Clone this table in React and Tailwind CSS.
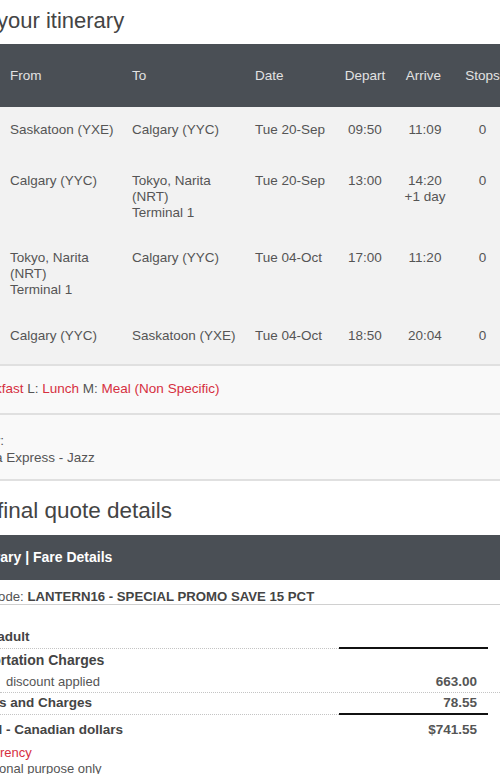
import React from "react";

const rows = [
  { from: ["Saskatoon (YXE)"], to: ["Calgary (YYC)"], date: "Tue 20-Sep", dep: "09:50", arr: ["11:09"], stops: "0", pb: "pb-[20px]" },
  { from: ["Calgary (YYC)"], to: ["Tokyo, Narita", "(NRT)", "Terminal 1"], date: "Tue 20-Sep", dep: "13:00", arr: ["14:20", "+1 day"], stops: "0", pb: "pb-[14px]" },
  { from: ["Tokyo, Narita", "(NRT)", "Terminal 1"], to: ["Calgary (YYC)"], date: "Tue 04-Oct", dep: "17:00", arr: ["11:20"], stops: "0", pb: "pb-[15px]" },
  { from: ["Calgary (YYC)"], to: ["Saskatoon (YXE)"], date: "Tue 04-Oct", dep: "18:50", arr: ["20:04"], stops: "0", pb: "pb-[20px]" },
];

function Lines({ items }) {
  return (
    <div className="flex flex-col">
      {items.map((t, i) => (
        <span key={i} className="whitespace-nowrap">{t}</span>
      ))}
    </div>
  );
}

export default function App() {
  const cols = "grid grid-cols-[122px_123px_90px_60px_60px_55px] w-[510px]";
  return (
    <div className="w-[500px] h-[774px] overflow-hidden bg-white font-['Liberation_Sans',Arial,sans-serif] text-[#555]">
      {/* Title 1 */}
      <div className="h-[44px] pt-[7px] whitespace-nowrap">
        <h1 className="-ml-[3px] text-[22px] leading-[28px] text-[#444] font-normal">your itinerary</h1>
      </div>

      {/* Itinerary table header */}
      <div className={`${cols} h-[63px] bg-[#4a4f55] text-[13.5px] text-[#e2e2e2] items-center pt-[2px]`}>
        <div className="pl-[10px]">From</div>
        <div className="pl-[10px]">To</div>
        <div className="pl-[10px]">Date</div>
        <div className="text-center">Depart</div>
        <div className="text-center pr-[3px]">Arrive</div>
        <div className="text-center">Stops</div>
      </div>

      {/* Rows */}
      <div className="bg-[#f2f2f2] text-[13.5px] leading-[16px] text-[#555]">
        {rows.map((r, i) => (
          <div key={i} className={`${cols} pt-[15px] ${r.pb} items-start`}>
            <div className="pl-[10px]"><Lines items={r.from} /></div>
            <div className="pl-[10px]"><Lines items={r.to} /></div>
            <div className="pl-[10px] whitespace-nowrap">{r.date}</div>
            <div className="text-center">{r.dep}</div>
            <div className="text-center flex flex-col items-center">
              {r.arr.map((a, j) => (
                <span key={j} className="whitespace-nowrap">{a}</span>
              ))}
            </div>
            <div className="text-center">{r.stops}</div>
          </div>
        ))}
      </div>

      {/* Legend */}
      <div className="border-t-2 border-b-2 border-[#e0e0e0] bg-[#f9f9f9] h-[51px] flex items-center text-[13.5px] whitespace-nowrap">
        <div className="-ml-[50px]">
          <span className="text-[#555]">B: </span>
          <span className="text-[#d6303f]">Breakfast</span>
          <span className="text-[#555]"> L: </span>
          <span className="text-[#d6303f]">Lunch</span>
          <span className="text-[#555]"> M: </span>
          <span className="text-[#d6303f]">Meal (Non Specific)</span>
        </div>
      </div>

      {/* Operated by */}
      <div className="border-b-2 border-[#e0e0e0] bg-[#f9f9f9] h-[66px] pt-[17px] text-[13.5px] leading-[17px] whitespace-nowrap text-[#555]">
        <div className="-ml-[74px]">Operated by:</div>
        <div className="-ml-[65px]">Air Canada Express - Jazz</div>
      </div>

      {/* Title 2 */}
      <div className="h-[54px] pt-[16px] whitespace-nowrap">
        <h2 className="-ml-[3px] text-[22.5px] leading-[28px] text-[#444] font-normal">final quote details</h2>
      </div>

      {/* Band */}
      <div className="h-[45px] bg-[#4a4f55] flex items-center whitespace-nowrap">
        <div className="-ml-[34px] text-[14px] font-bold text-white">Itinerary | Fare Details</div>
      </div>

      {/* Promo */}
      <div className="h-[25px] pt-[9px] border-b border-[#d0d0d0] text-[13.2px] leading-[16px] whitespace-nowrap">
        <div className="-ml-[51px]">
          <span className="text-[#555]">Promo code: </span>
          <span className="font-bold text-[#444]">LANTERN16 - SPECIAL PROMO SAVE 15 PCT</span>
        </div>
      </div>

      {/* Fare details */}
      <div className="mt-[22px] text-[13px] whitespace-nowrap w-[520px]">
        {/* Row A */}
        <div className="flex h-[22px]">
          <div className="w-[339px] border-b border-dotted border-[#c4c4c4] flex items-center">
            <span className="-ml-[14px] text-[13.5px] font-bold text-[#444]">1 adult</span>
          </div>
          <div className="w-[149px] border-b-2 border-[#111]"></div>
          <div className="flex-1"></div>
        </div>
        {/* Row B */}
        <div className="flex h-[23px] items-center">
          <span className="-ml-[77px] text-[14px] font-bold text-[#444]">Air Transportation Charges</span>
        </div>
        {/* Row C */}
        <div className="flex h-[21px] border-b border-dotted border-[#c4c4c4]">
          <div className="w-[339px] flex items-center">
            <span className="ml-[6px] text-[#555]">discount applied</span>
          </div>
          <div className="w-[149px] pr-[11px] flex items-center justify-end text-[13.5px] font-bold text-[#555]">663.00</div>
        </div>
        {/* Row D */}
        <div className="flex h-[22px]">
          <div className="w-[339px] border-b border-dotted border-[#c4c4c4] flex items-center">
            <span className="-ml-[69px] text-[13.5px] font-bold text-[#444]">Taxes, Fees and Charges</span>
          </div>
          <div className="w-[149px] pr-[11px] border-b-2 border-[#111] flex items-center justify-end text-[13.5px] font-bold text-[#555]">78.55</div>
          <div className="flex-1"></div>
        </div>
        {/* Row E */}
        <div className="flex h-[30px]">
          <div className="w-[339px] flex items-center">
            <span className="-ml-[29px] text-[13.5px] font-bold text-[#444]">Total - Canadian dollars</span>
          </div>
          <div className="w-[149px] pr-[11px] flex items-center justify-end text-[13.5px] font-bold text-[#555]">$741.55</div>
        </div>
        <div className="leading-[16px]">
          <div className="-ml-[21px] text-[#d6303f]">Currency</div>
          <div className="-ml-[74px] text-[#555]">For informational purpose only</div>
        </div>
      </div>
    </div>
  );
}
